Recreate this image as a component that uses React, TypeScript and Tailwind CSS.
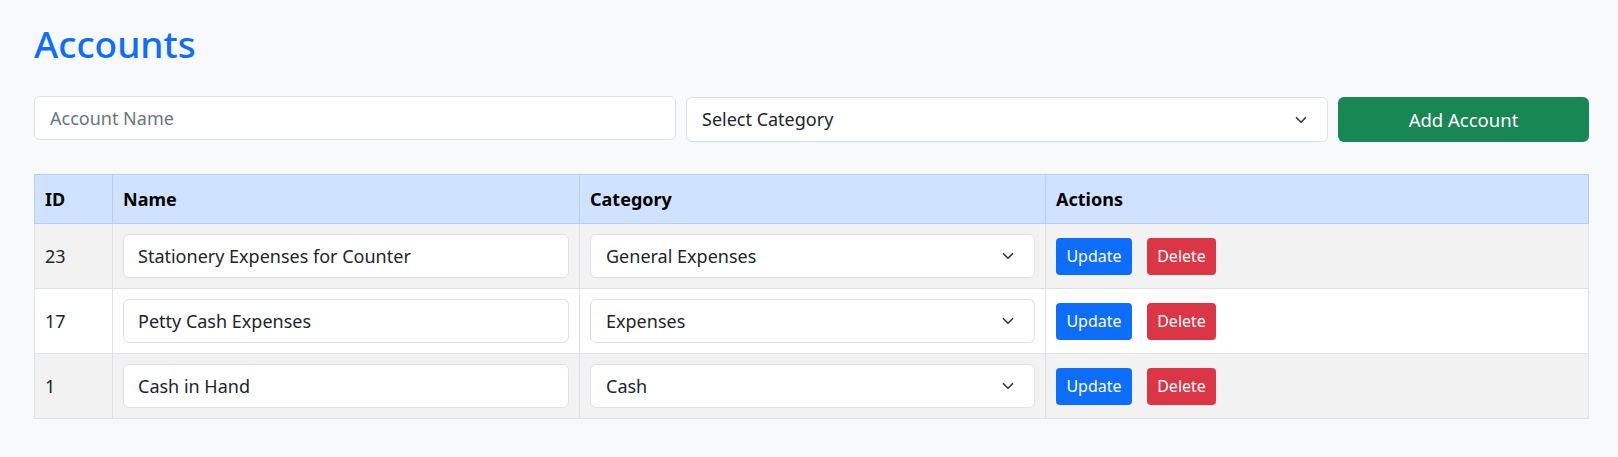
import { ChevronDown } from 'lucide-react'

const accounts = [
  { id: 23, name: 'Stationery Expenses for Counter', category: 'General Expenses' },
  { id: 17, name: 'Petty Cash Expenses', category: 'Expenses' },
  { id: 1, name: 'Cash in Hand', category: 'Cash' },
]

const categories = ['Cash', 'Expenses', 'General Expenses']

function SelectBox({ value, className }: { value: string; className?: string }) {
  return (
    <div className={`relative ${className ?? ''}`}>
      <select
        defaultValue={value}
        className="w-full h-full appearance-none bg-white border border-[#dee2e6] rounded-[6px] pl-[15px] pr-10 text-[18px] text-[#212529] outline-none"
      >
        <option value="">Select Category</option>
        {categories.map((c) => (
          <option key={c} value={c}>
            {c}
          </option>
        ))}
      </select>
      <ChevronDown
        size={18}
        strokeWidth={2.2}
        className="absolute right-[18px] top-1/2 -translate-y-1/2 text-[#343a40] pointer-events-none"
      />
    </div>
  )
}

export default function App() {
  return (
    <div
      className="min-h-screen bg-[#f8f9fa] pl-[34px] pr-[29px] pt-[22px] text-[#212529]"
      style={{ fontFamily: '"Noto Sans", "Open Sans", sans-serif' }}
    >
      <h1 className="text-[37px] leading-[1.2] font-medium text-[#0d6efd]">Accounts</h1>

      {/* Add form */}
      <div className="grid grid-cols-[1fr_1fr_251px] gap-[10px] mt-[30px] items-start">
        <input
          placeholder="Account Name"
          className="w-full h-[44px] bg-white border border-[#dee2e6] rounded-[6px] px-[15px] text-[18px] placeholder:text-[#6c757d] outline-none"
        />
        <SelectBox value="" className="h-[45px] mt-[1px]" />
        <button className="h-[45px] mt-[1px] rounded-[6px] bg-[#198754] text-white text-[18.5px]">
          Add Account
        </button>
      </div>

      {/* Table */}
      <table className="w-full mt-[32px] border-collapse text-[18px]">
        <thead>
          <tr className="bg-[#cfe2ff] h-[49px] text-black">
            <th className="w-[78px] border border-[#b9cdec] px-[10px] text-left font-bold">ID</th>
            <th className="w-[467px] border border-[#b9cdec] px-[10px] text-left font-bold">Name</th>
            <th className="w-[466px] border border-[#b9cdec] px-[10px] text-left font-bold">Category</th>
            <th className="border border-[#b9cdec] px-[10px] text-left font-bold">Actions</th>
          </tr>
        </thead>
        <tbody>
          {accounts.map((a, i) => (
            <tr key={a.id} className={i % 2 === 0 ? 'bg-[#f2f2f2]' : 'bg-white'}>
              <td className="border border-[#dee2e6] px-[10px] h-[65px]">{a.id}</td>
              <td className="border border-[#dee2e6] px-[10px]">
                <input
                  defaultValue={a.name}
                  className="w-full h-[44px] bg-white border border-[#dee2e6] rounded-[6px] px-[14px] outline-none"
                />
              </td>
              <td className="border border-[#dee2e6] px-[10px]">
                <SelectBox value={a.category} className="h-[44px]" />
              </td>
              <td className="border border-[#dee2e6] px-[10px]">
                <div className="flex items-center gap-[15px]">
                  <button className="w-[76px] h-[37px] rounded-[4px] bg-[#0d6efd] text-white text-[16px]">
                    Update
                  </button>
                  <button className="w-[69px] h-[37px] rounded-[4px] bg-[#dc3545] text-white text-[16px]">
                    Delete
                  </button>
                </div>
              </td>
            </tr>
          ))}
        </tbody>
      </table>
    </div>
  )
}
